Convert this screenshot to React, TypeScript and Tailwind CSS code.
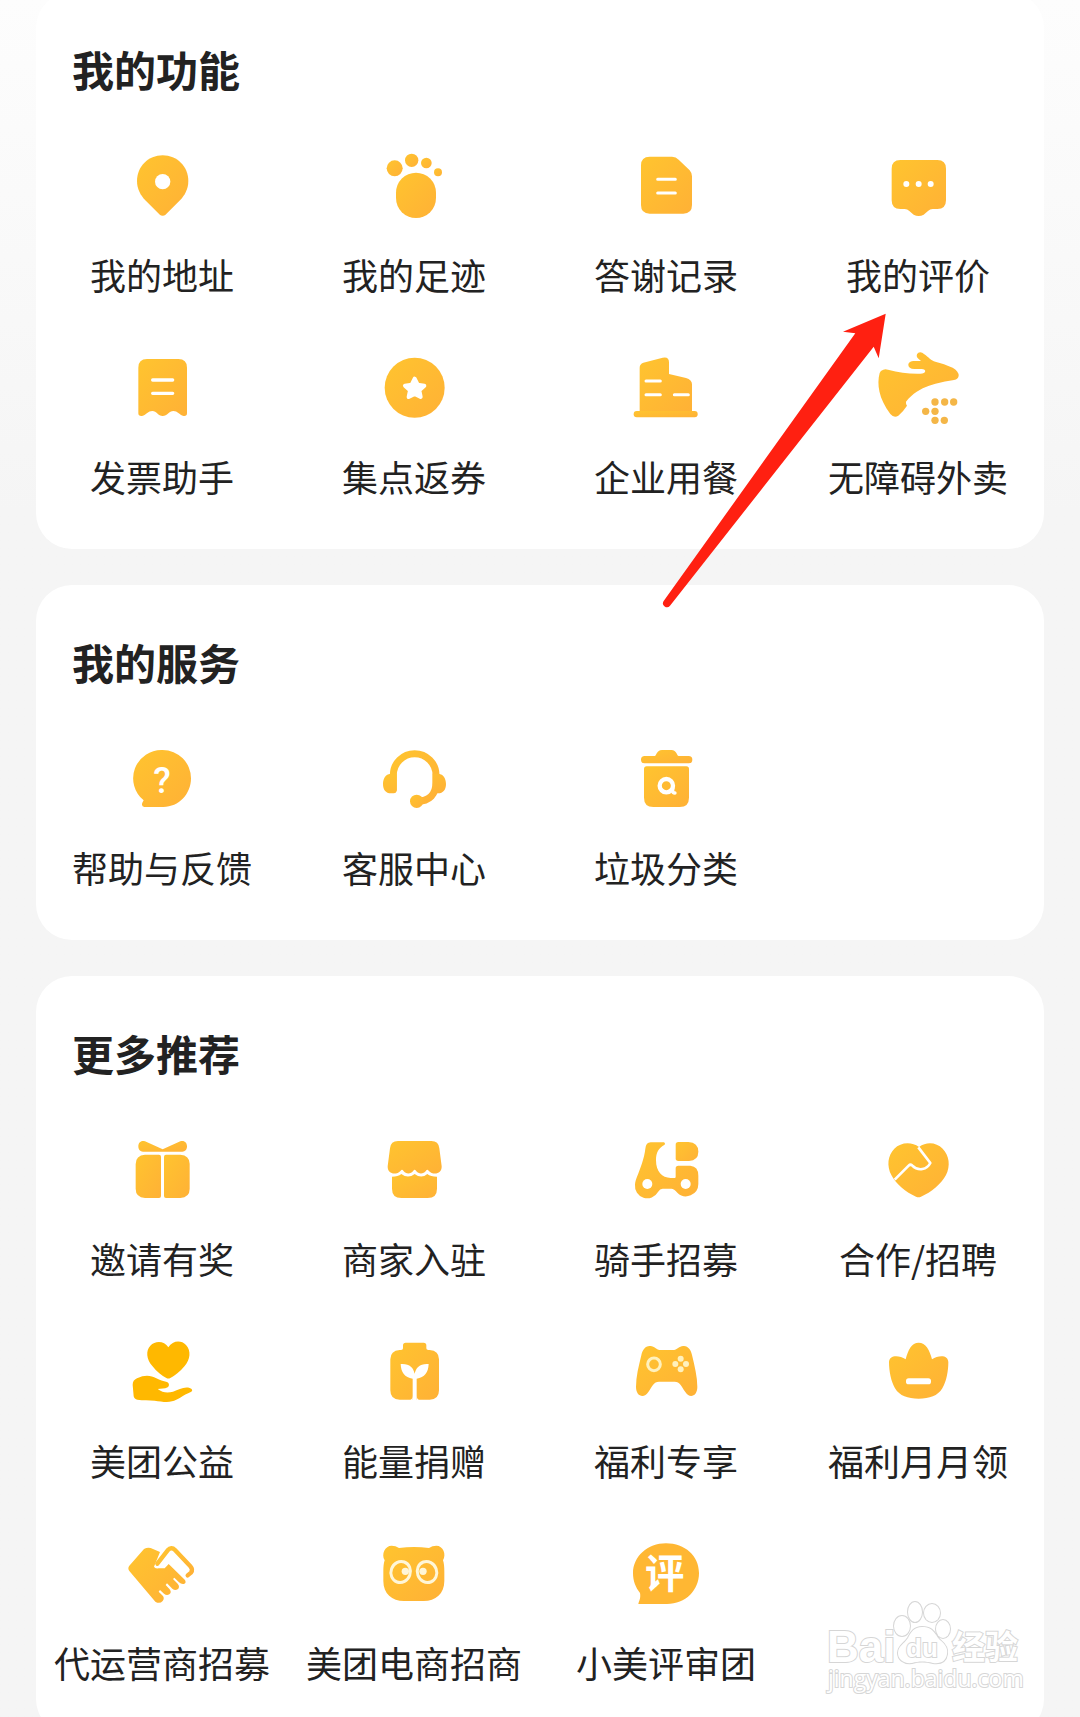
import type { ReactNode } from "react";

type Item = { label: string; icon: ReactNode };
type Section = { title: string; items: Item[] };

const AMBER = "url(#amber)";

/** Every icon is drawn on a 216 grid and shown at 72px. */
function Icon({ children }: { children: ReactNode }) {
  return (
    <svg viewBox="0 0 216 216" className="size-[72px] overflow-visible" fill={AMBER} aria-hidden="true">
      {children}
    </svg>
  );
}

const icons = {
  pin: (
    <Icon>
      <path d="M110 13c43 0 77 34 77 77 0 24-11 43-25 58l-42 42q-10 9-20 0l-42-42c-14-15-25-34-25-58 0-43 34-77 77-77z" />
      <circle cx="110" cy="92" r="23" fill="#fff" />
    </Icon>
  ),
  paw: (
    <Icon>
      <circle cx="50" cy="52" r="24" />
      <circle cx="101" cy="28" r="20" />
      <circle cx="145" cy="36" r="16" />
      <circle cx="180" cy="64" r="12" />
      <rect x="54" y="65" width="120" height="136" rx="60" />
    </Icon>
  ),
  note: (
    <Icon>
      <path d="M59 17h67q12 0 20 9l33 32q7 8 7 18v86q0 26-26 26H59q-26 0-26-26V43q0-26 26-26z" />
      <path d="M83 85h53M83 126h53" stroke="#fff" strokeWidth="9" strokeLinecap="round" />
    </Icon>
  ),
  bubble: (
    <Icon>
      <path d="M55 27h111q26 0 26 26v95q0 26-26 26h-14q-8 0-14 6l-13 11q-15 8-30 0l-13-11q-6-6-14-6H55q-26 0-26-26V53q0-26 26-26z" />
      <g fill="#fff">
        <circle cx="73" cy="99" r="9" />
        <circle cx="110" cy="99" r="9" />
        <circle cx="146" cy="99" r="9" />
      </g>
    </Icon>
  ),
  receipt: (
    <Icon>
      <path d="M63 18h94q26 0 26 26v137q0 9-10 8c-14-4-18-15-31-15s-18 15-32 15-18-15-31-15-17 11-31 15q-11 1-11-8V44q0-26 26-26z" />
      <path d="M80 81h60M80 121h60" stroke="#fff" strokeWidth="10" strokeLinecap="round" />
    </Icon>
  ),
  star: (
    <Icon>
      <circle cx="110" cy="104" r="90" />
      <path
        d="M110 77l9 18 20 3-15 14 4 20-18-9-18 9 4-20-15-14 20-3z"
        fill="#fff"
        stroke="#fff"
        strokeWidth="12"
        strokeLinejoin="round"
      />
    </Icon>
  ),
  building: (
    <Icon>
      <path d="M29 176V44q0-11 11-15l58-15q19-4 19 14v35l51 12q18 5 18 19v82z" />
      <rect x="11" y="174" width="192" height="19" rx="9" />
      <path d="M48 84h43M48 125h43M133 125h42" stroke="#fff" strokeWidth="9" strokeLinecap="round" />
    </Icon>
  ),
  kangaroo: (
    <Icon>
      <path d="M4 50q6-2 14 0c34 8 62 13 97 12 19 0 19-14 4-14H97c-12 0-18-5-18-12 0-8 8-12 18-12h20c-11-8-15-13-12-20 4-8 14-8 22 0 12 8 21 20 33 22 18 4 34 10 52 18q18 10 18 24-1 10-14 13c-46 8-105 16-144 65q-1 8 3 12-10 16-26 30-13 8-24-5C-10 136-16 94-7 60q2-8 11-10z" />
      <g fill="#f4b647">
        <circle cx="159" cy="147" r="11" />
        <circle cx="188" cy="147" r="11" />
        <circle cx="215" cy="147" r="11" />
        <circle cx="131" cy="175" r="11" />
        <circle cx="159" cy="175" r="11" />
        <circle cx="159" cy="202" r="11" />
        <circle cx="187" cy="202" r="11" />
      </g>
    </Icon>
  ),
  help: (
    <Icon>
      <path d="M110 18a85 85 0 0 1 85 85c0 47-36 86-83 86H55q-10-2-6-13l4-7a85 85 0 0 1 57-151z" />
      <text x="108" y="146" fill="#fff" fontSize="108" textAnchor="middle" className="font-['Roboto',sans-serif] font-medium">
        ?
      </text>
    </Icon>
  ),
  headset: (
    <Icon>
      <path
        d="M46 140V93a64 64 0 0 1 128 0v22c0 35-18 57-58 57"
        fill="none"
        stroke={AMBER}
        strokeWidth="21"
      />
      <path d="M56 89v50q0 9-9 9h-8c-16 0-24-11-24-28 0-17 8-29 22-31zM164 89h18c14 2 22 14 22 31s-8 28-24 28h-16z" />
      <circle cx="116" cy="172" r="20" />
    </Icon>
  ),
  trash: (
    <Icon>
      <path d="M44 36h30c6 0 5-18 22-18h28c17 0 16 18 22 18h30a11 11 0 0 1 0 22H44a11 11 0 0 1 0-22z" />
      <path d="M50 67h119q8 0 8 8v86q0 28-28 28H70q-28 0-28-28V75q0-8 8-8z" />
      <circle cx="109" cy="125" r="20" fill="none" stroke="#fff" strokeWidth="13" />
      <path d="M128 126v14q0 7 7 7" fill="none" stroke="#fff" strokeWidth="10" strokeLinecap="round" />
    </Icon>
  ),
  gift: (
    <Icon>
      <path d="M57 19l53 24 53-24c12-4 20 4 20 15 0 10-6 16-14 16H51c-8 0-14-6-14-16 0-11 8-19 20-15z" />
      <path d="M57 59h42q6 0 6 6v118q0 6-6 6H57q-28-2-28-28V87q0-26 28-28z" />
      <path d="M120 59h43q28 2 28 28v74q0 26-28 28h-43q-6 0-6-6V65q0-6 6-6z" />
    </Icon>
  ),
  shop: (
    <Icon>
      <path d="M60 18h100q22 0 24 22l7 54c1 24-26 28-39 13q-4-5-8 0c-8 11-22 11-30 0q-4-5-8 0c-8 11-22 11-30 0q-4-5-8 0c-13 15-40 11-39-13l7-54q2-22 24-22z" />
      <path d="M42 125q18 0 28-8 20 15 40 0 20 15 38 0 10 8 29 8v36q0 28-28 28H70q-28 0-28-28z" />
    </Icon>
  ),
  scooter: (
    <Icon>
      <path d="M62 22h40q5 3 2 7c-18 10-26 22-26 47 0 33 18 53 44 53h12q3 0 3-4v-25q0-8 8-8h36q24 2 24 30v25a37 37 0 0 1-63 26q-10-12-18-12H98q-8 0-14 10a37 37 0 0 1-69-22c0-8 3-16 6-24 10-24 22-56 25-84q2-19 16-19z" />
      <path d="M145 21h30q30 2 30 29 0 26-28 28h-32q-8 0-8-8V29q0-8 8-8z" />
      <circle cx="52" cy="147" r="15" fill="#fff" />
      <circle cx="167" cy="147" r="15" fill="#fff" />
    </Icon>
  ),
  heart: (
    <Icon>
      <path d="M111 36C134 19 163 22 182 41c20 20 24 52 10 79-14 26-44 52-75 65q-7 4-15 0C72 172 41 146 28 120 14 93 17 61 37 41c19-19 51-22 74-5z" />
      <path d="M38 134l42-42q5-5 10-1c20 20 45 12 55-7l-36-47" fill="none" stroke="#fff" strokeWidth="8" strokeLinejoin="round" />
    </Icon>
  ),
  charity: (
    <Icon>
      <g fill="#ffb800">
        <path d="M127 31c13-21 39-22 53-7 16 17 13 44-4 63-14 17-30 29-43 36q-6 3-12 0c-13-7-29-19-42-36-18-21-20-46-6-61 15-16 42-15 54 5z" />
        <path d="M20 144c0-10 4-16 13-20 24-12 42-9 58 0 11 6 20 8 32 11 7 3 8 11 2 16-9 5-20 4-30 5 15 12 31 12 46 8 18-5 32-16 50-11 8 3 10 8 5 11-27 11-40 25-58 29-16 5-34 0-52-2-17-2-35 0-52-3q-9-1-11-10z" />
      </g>
    </Icon>
  ),
  battery: (
    <Icon>
      <path d="M83 17h54q8 0 8 8v9q0 5 6 5h4q28 2 28 28v93q0 28-28 28H65q-28 0-28-28V67q0-26 28-28h4q6 0 6-5v-9q0-8 8-8z" />
      <path
        d="M68 81c26-2 38 10 42 29 4-19 16-31 42-29-1 25-12 41-36 44v64h-12v-64c-24-3-35-19-36-44z"
        fill="#fff"
      />
      <path d="M92 190q12-2 12-14v14zM128 190q-12-2-12-14v14z" fill="#fff" />
    </Icon>
  ),
  gamepad: (
    <Icon>
      <path d="M59 27c14-2 18 12 34 12h35c15 0 20-14 34-12 13 1 21 12 24 27 8 34 16 66 16 96 0 28-23 36-36 15-12-18-16-31-32-31H87c-16 0-20 13-32 31-13 21-37 13-37-15 0-31 8-62 16-95 4-17 11-27 25-28z" />
      <circle cx="72" cy="82" r="19" fill="none" stroke="#fff1bd" strokeWidth="9" />
      <g fill="#fff1bd">
        <circle cx="152" cy="65" r="9" />
        <circle cx="136" cy="81" r="9" />
        <circle cx="168" cy="81" r="9" />
        <circle cx="152" cy="97" r="9" />
      </g>
    </Icon>
  ),
  crown: (
    <Icon>
      <path d="M71 67c7-28 18-50 39-50s33 22 40 50c20-14 49-14 49 9 0 26-6 58-18 78-14 23-38 31-71 31s-57-8-71-31C27 134 21 102 21 76c0-23 30-23 50-9z" />
      <rect x="72" y="124" width="75" height="18" rx="8" fill="#fff" />
    </Icon>
  ),
  handshake: (
    <Icon>
      <path
        d="M94 74l31-40q11-12 22-1l46 49q9 10 2 19l-10 8"
        fill="none"
        stroke={AMBER}
        strokeWidth="13"
        strokeLinecap="round"
        strokeLinejoin="round"
      />
      <path d="M54 30q10-6 20-3l28 12-18 44q3 7 14 5l18 0 12-13 49 48q5 10-4 12-8 1-14-5l-14-14-4 4 14 14q8 10 0 17-8 5-16-2l-16-16-4 5 12 13q7 9-1 15-8 5-16-2l-12-11-4 5 13 13q5 8-1 15-9 10-22 2L10 96q-6-9 0-16z" />
    </Icon>
  ),
  panda: (
    <Icon>
      <path d="M41 20q12 0 22 7 45-6 90 0 10-7 22-7c20 0 31 25 20 44 3 8 4 20 4 34v28c0 38-26 60-62 60H78c-36 0-62-22-62-60V98c0-14 1-26 4-34C9 45 21 20 41 20z" />
      <g fill="none" stroke="#fff6d8" strokeWidth="9">
        <ellipse cx="68" cy="99" rx="29" ry="32" transform="rotate(20 68 99)" />
        <ellipse cx="147" cy="99" rx="29" ry="32" transform="rotate(-20 147 99)" />
      </g>
      <circle cx="82" cy="97" r="11" fill="#fff6d8" />
      <circle cx="135" cy="97" r="11" fill="#fff6d8" />
    </Icon>
  ),
  review: (
    <Icon>
      <path
        d="M108 13c57 0 99 38 99 89s-40 93-96 93H25c2-10 8-17 5-33C17 146 9 126 9 103c0-51 44-90 99-90z"
        fill="#ffb733"
      />
      <text
        x="104"
        y="148"
        fill="#fff"
        fontSize="118"
        textAnchor="middle"
        className="font-['Noto_Sans_CJK_SC',sans-serif] font-bold"
      >
        评
      </text>
    </Icon>
  ),
};

const features: Section = {
  title: "我的功能",
  items: [
    { label: "我的地址", icon: icons.pin },
    { label: "我的足迹", icon: icons.paw },
    { label: "答谢记录", icon: icons.note },
    { label: "我的评价", icon: icons.bubble },
    { label: "发票助手", icon: icons.receipt },
    { label: "集点返券", icon: icons.star },
    { label: "企业用餐", icon: icons.building },
    { label: "无障碍外卖", icon: icons.kangaroo },
  ],
};

const services: Section = {
  title: "我的服务",
  items: [
    { label: "帮助与反馈", icon: icons.help },
    { label: "客服中心", icon: icons.headset },
    { label: "垃圾分类", icon: icons.trash },
  ],
};

const more: Section = {
  title: "更多推荐",
  items: [
    { label: "邀请有奖", icon: icons.gift },
    { label: "商家入驻", icon: icons.shop },
    { label: "骑手招募", icon: icons.scooter },
    { label: "合作/招聘", icon: icons.heart },
    { label: "美团公益", icon: icons.charity },
    { label: "能量捐赠", icon: icons.battery },
    { label: "福利专享", icon: icons.gamepad },
    { label: "福利月月领", icon: icons.crown },
    { label: "代运营商招募", icon: icons.handshake },
    { label: "美团电商招商", icon: icons.panda },
    { label: "小美评审团", icon: icons.review },
  ],
};

function Card({ section, children }: { section: Section; children?: ReactNode }) {
  return (
    <section className="relative rounded-[36px] bg-white pt-[47px] pb-[47px]">
      <h2 className="px-9 text-[42px] leading-[60px] font-bold">{section.title}</h2>
      <div className="mt-[52px] grid grid-cols-4 gap-y-[53px]">
        {section.items.map((item) => (
          <a key={item.label} href="#" className="flex flex-col items-center gap-[25px]">
            {item.icon}
            <span className="text-[36px] leading-[52px] whitespace-nowrap">{item.label}</span>
          </a>
        ))}
      </div>
      {children}
    </section>
  );
}

/** Red pointer aimed at 我的评价, its tail runs over the card below */
function Arrow() {
  return (
    <svg
      viewBox="0 0 228 297"
      className="pointer-events-none absolute top-[320px] right-[156px] z-10 h-[297px] w-[228px]"
      fill="#ff2011"
      aria-hidden="true"
    >
      <path d="M225.700 1.700L183 19.700l12.300 1.600L3.500 289.200a4 4 0 0 0 6.500 4.600L213.700 34.700l5 11.600z" />
    </svg>
  );
}

function Watermark() {
  return (
    <svg
      viewBox="0 0 210 105"
      className="pointer-events-none absolute right-[50px] bottom-[17px] h-[105px] w-[210px]"
      fill="#fff"
      stroke="#d6d6d6"
      strokeWidth="2"
      paintOrder="stroke"
    >
      <text x="7" y="67" fontSize="44" className="font-['Liberation_Sans',sans-serif] font-bold">
        Bai
      </text>
      <g>
        <ellipse cx="82" cy="31" rx="8" ry="10" />
        <ellipse cx="95" cy="17" rx="7" ry="10" />
        <ellipse cx="112" cy="18" rx="8" ry="9" />
        <ellipse cx="123" cy="34" rx="7" ry="9" />
        <path d="M102 32c12 0 13 8 18 13 6 5 8 9 7 14-1 7-6 10-14 9-8-2-14-2-21 0-9 1-14-4-14-10 0-7 6-9 10-15 3-6 6-11 14-11z" />
      </g>
      <text x="102" y="62" fontSize="26" textAnchor="middle" className="font-['Liberation_Sans',sans-serif] font-bold">
        du
      </text>
      <text x="132" y="64" fontSize="33" className="font-['Noto_Sans_CJK_SC',sans-serif] font-bold">
        经验
      </text>
      <text x="8" y="92" fontSize="23" className="font-['Open_Sans',sans-serif]">
        jingyan.baidu.com
      </text>
    </svg>
  );
}

export default function App() {
  return (
    <div className="relative h-screen overflow-hidden bg-[#f5f5f5] bg-linear-to-b from-[#fdfdfd] to-[#f5f5f5] to-30% font-['Noto_Sans_CJK_SC',sans-serif] text-[#222]">
      <svg className="absolute size-0" aria-hidden="true">
        <defs>
          <linearGradient id="amber" x1="0" y1="0" x2="1" y2="1">
            <stop offset="0" stopColor="#ffc42f" />
            <stop offset="1" stopColor="#ffb136" />
          </linearGradient>
        </defs>
      </svg>
      <main className="-mt-2 flex flex-col gap-9 px-9">
        <Card section={features}>
          <Arrow />
        </Card>
        <Card section={services} />
        <Card section={more} />
      </main>
      <Watermark />
    </div>
  );
}
